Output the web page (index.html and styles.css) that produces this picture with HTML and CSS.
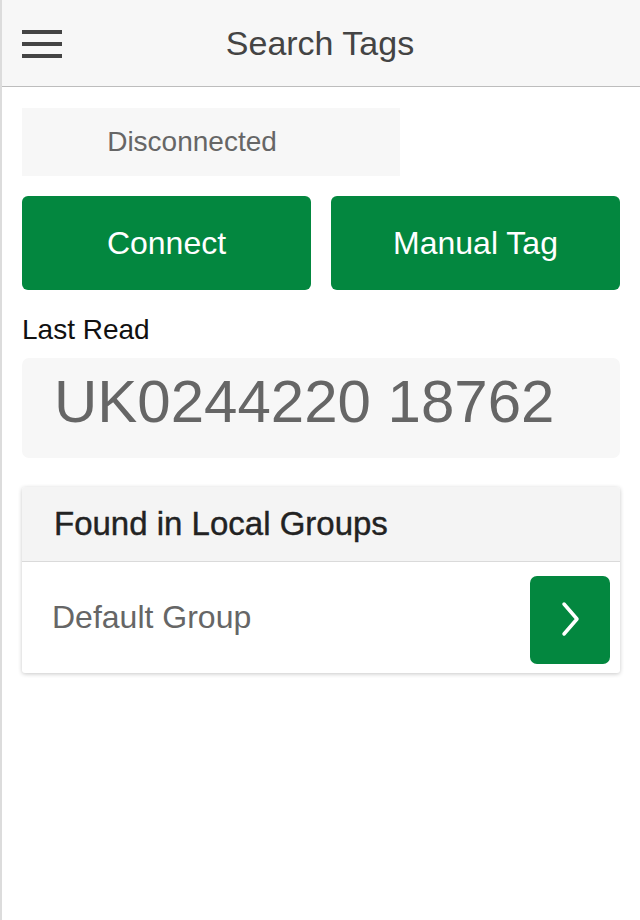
FILE: index.html
```html
<!DOCTYPE html>
<html lang="en">
<head>
    <meta charset="UTF-8">
    <meta name="viewport" content="width=device-width, initial-scale=1.0">
    <title>Search Tags</title>
    <link rel="stylesheet" href="styles.css">
</head>
<body>
    <div class="page">
        <header class="top-bar">
            <button class="menu-button" aria-label="Menu">
                <svg width="40" height="28" viewBox="0 0 40 28">
                    <rect x="0" y="0" width="40" height="4" fill="#444"/>
                    <rect x="0" y="12" width="40" height="4" fill="#444"/>
                    <rect x="0" y="24" width="40" height="4" fill="#444"/>
                </svg>
            </button>
            <h1 class="title">Search Tags</h1>
            <div></div>
        </header>

        <main class="content">
            <div class="status">Disconnected</div>

            <div class="actions">
                <button class="green-button">Connect</button>
                <button class="green-button">Manual Tag</button>
            </div>

            <div class="label">Last Read</div>
            <div class="tag-box">UK0244220 18762</div>

            <section class="card">
                <div class="card-header">Found in Local Groups</div>
                <div class="card-row">
                    <span class="group-name">Default Group</span>
                    <button class="go-button" aria-label="Open">
                        <svg width="80" height="88" viewBox="0 0 80 88">
                            <polyline points="34,28 47,43 34,58" fill="none" stroke="#fff" stroke-width="3.5" stroke-linecap="round" stroke-linejoin="round"/>
                        </svg>
                    </button>
                </div>
            </section>
        </main>
    </div>
</body>
</html>
```

FILE: styles.css
```css
body {
    margin: 0;
    font-family: "Liberation Sans", Arial, sans-serif;
    background-color: #fff;
}
.page {
    min-height: 920px;
    border-left: 2px solid #dcdcdc;
    box-sizing: border-box;
}
.top-bar {
    display: grid;
    grid-template-columns: 1fr auto 1fr;
    align-items: center;
    height: 86px;
    background-color: #f7f7f7;
    border-bottom: 1px solid #bdbdbd;
}
.menu-button {
    justify-self: start;
    display: flex;
    padding: 0;
    margin: 2px 0 0 20px;
    border: none;
    background: none;
}
.title {
    margin: 0 0 0 -2px;
    font-size: 34px;
    font-weight: normal;
    color: #444;
}
.content {
    padding: 21px 20px 0;
}
.status {
    width: 378px;
    height: 68px;
    box-sizing: border-box;
    padding-right: 38px;
    display: flex;
    align-items: center;
    justify-content: center;
    background-color: #f7f7f7;
    color: #666;
    font-size: 28px;
}
.actions {
    display: grid;
    grid-template-columns: 1fr 1fr;
    gap: 20px;
    margin-top: 20px;
}
.green-button {
    height: 94px;
    border: none;
    border-radius: 6px;
    background-color: #03873f;
    color: #fff;
    font-family: inherit;
    font-size: 32px;
    padding: 0;
}
.label {
    margin-top: 25px;
    line-height: 30px;
    font-size: 28px;
    color: #111;
}
.tag-box {
    margin-top: 13px;
    height: 100px;
    box-sizing: border-box;
    padding: 0 32px 14px;
    display: flex;
    align-items: center;
    background-color: #f7f7f7;
    border-radius: 7px;
    color: #666;
    font-size: 60px;
}
.card {
    margin-top: 29px;
    border-radius: 3px;
    box-shadow: 0 1px 4px rgba(0, 0, 0, 0.22);
    overflow: hidden;
}
.card-header {
    height: 74px;
    display: flex;
    align-items: center;
    padding-left: 32px;
    background-color: #f4f4f4;
    border-bottom: 1px solid #dadada;
    color: #222;
    font-size: 33px;
    -webkit-text-stroke: 0.4px #222;
}
.card-row {
    height: 111px;
    display: flex;
    justify-content: space-between;
    align-items: flex-start;
    padding-left: 30px;
    padding-right: 10px;
}
.group-name {
    align-self: center;
    color: #666;
    font-size: 32px;
}
.go-button {
    display: flex;
    margin-top: 14px;
    padding: 0;
    border: none;
    border-radius: 7px;
    background-color: #03873f;
}
```
